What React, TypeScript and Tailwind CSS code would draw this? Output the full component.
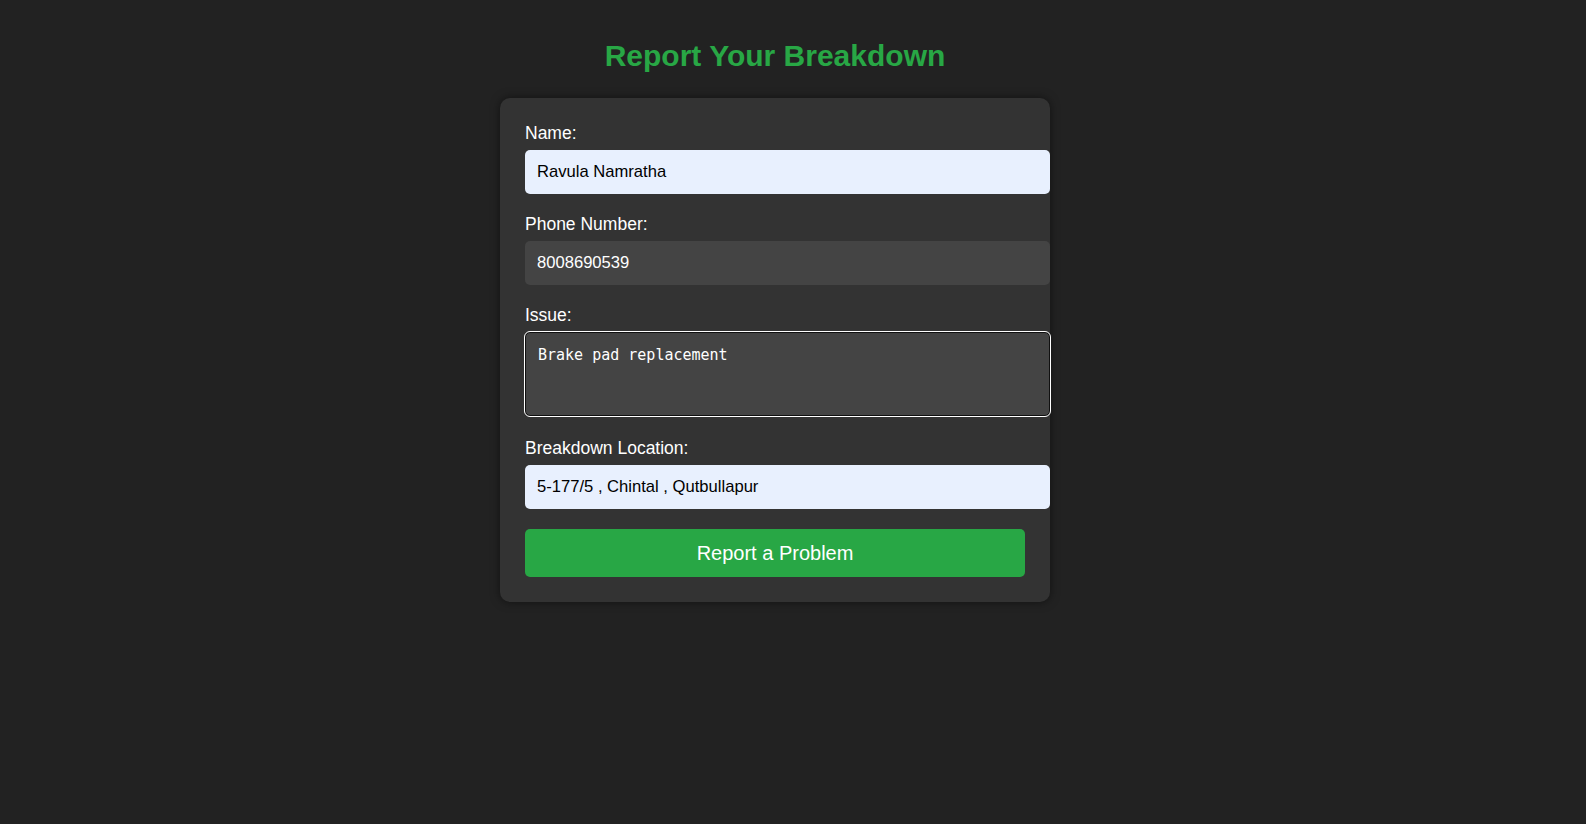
import React from 'react';

const labelCls = 'block text-[17.5px] leading-[20px] text-white mb-[7px]';

export default function App() {
  return (
    <div className="min-h-screen bg-[#222222] pt-[39px] font-['Liberation_Sans',Arial,sans-serif]">
      <div className="flex flex-col items-center pr-[36px]">
        <h2 className="mb-[25px] text-[30px] font-bold leading-[34px] text-[#28a745]">Report Your Breakdown</h2>
        <form className="w-[550px] rounded-[10px] bg-[#333333] p-[25px] shadow-[0_0_10px_rgba(0,0,0,0.5)]">
          <label className={labelCls}>Name:</label>
          <input
            defaultValue="Ravula Namratha"
            className="mb-5 block h-[44px] w-[525px] rounded-[5px] bg-[#e8f0fe] px-3 text-[16.6px] text-black outline-none"
          />
          <label className={labelCls}>Phone Number:</label>
          <input
            defaultValue="8008690539"
            className="mb-5 block h-[44px] w-[525px] rounded-[5px] bg-[#444444] px-3 text-[16.6px] text-white outline-none"
          />
          <label className={labelCls}>Issue:</label>
          <textarea
            defaultValue="Brake pad replacement"
            className="mb-[22px] block h-[84px] w-[525px] resize-none rounded-[5px] border border-[#101010] bg-[#444444] px-3 pt-[13px] font-['DejaVu_Sans_Mono',monospace] text-[15px] leading-[18px] text-white outline-1 outline-white"
          />
          <label className={labelCls}>Breakdown Location:</label>
          <input
            defaultValue="5-177/5 , Chintal , Qutbullapur"
            className="mb-5 block h-[44px] w-[525px] rounded-[5px] bg-[#e8f0fe] px-3 text-[16.6px] text-black outline-none"
          />
          <button
            type="button"
            className="block h-12 w-full rounded-[5px] bg-[#28a745] text-[20px] text-white"
          >
            Report a Problem
          </button>
        </form>
      </div>
    </div>
  );
}
